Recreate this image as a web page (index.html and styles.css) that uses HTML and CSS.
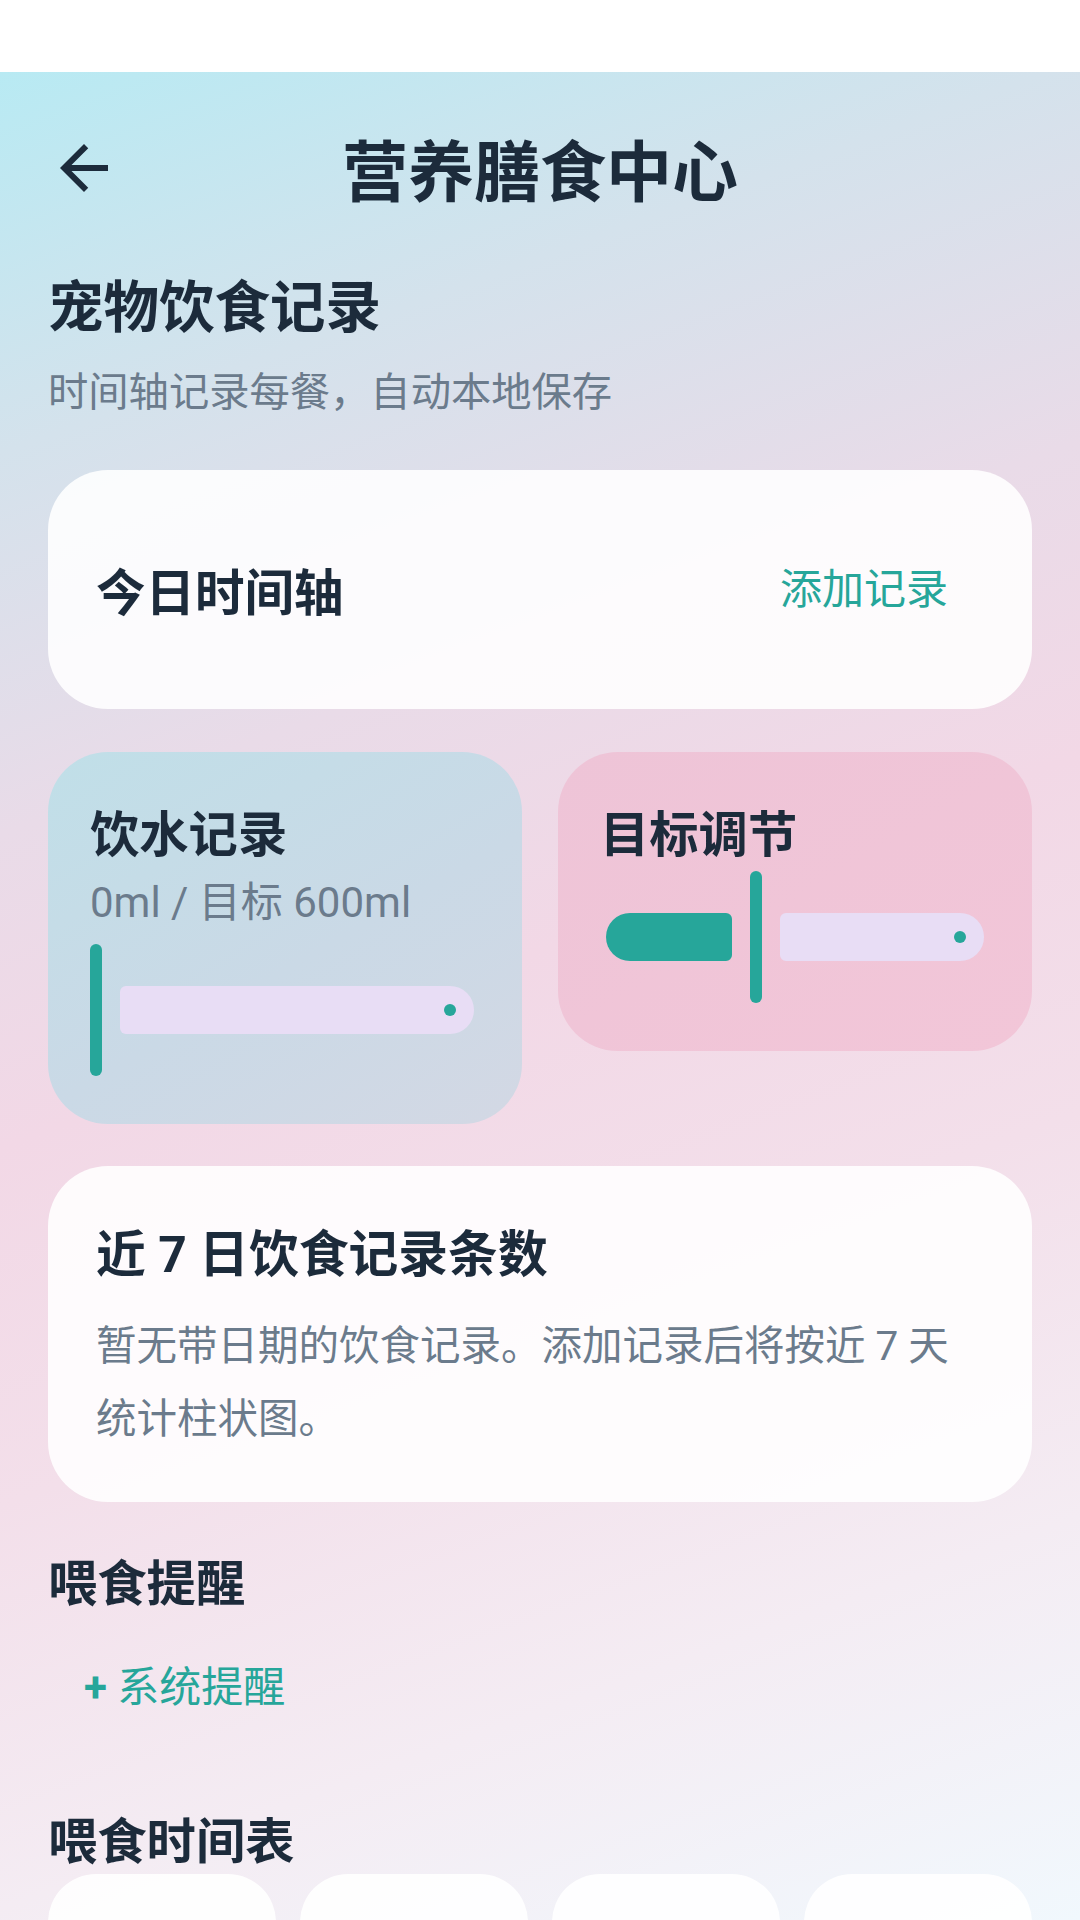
FILE: index.html
```html
<!DOCTYPE html>
<html lang="zh-CN">
<head>
<meta charset="utf-8">
<title>营养膳食中心</title>
<link rel="stylesheet" href="styles.css">
</head>
<body>
<div class="status-bar"></div>
<div class="screen">
  <header class="topbar">
    <button class="back" aria-label="返回">
      <svg viewBox="0 0 24 24" width="72" height="72"><path fill="currentColor" d="M20 11H7.83l5.59-5.59L12 4l-8 8 8 8 1.41-1.41L7.83 13H20v-2z"/></svg>
    </button>
    <h1 class="title">营养膳食中心</h1>
    <span></span>
  </header>

  <main class="content">
    <h2 class="page-heading">宠物饮食记录</h2>
    <p class="page-sub">时间轴记录每餐，自动本地保存</p>

    <section class="card timeline-card">
      <h3 class="timeline-title">今日时间轴</h3>
      <button class="text-btn">添加记录</button>
    </section>

    <div class="stats-row">
      <section class="stat-card water">
        <h3 class="stat-title">饮水记录</h3>
        <p class="stat-sub">0ml / 目标 600ml</p>
        <div class="slider">
          <span class="thumb"></span>
          <span class="track-inactive"><span class="stop"></span></span>
        </div>
      </section>
      <section class="stat-card goal">
        <h3 class="stat-title">目标调节</h3>
        <div class="slider">
          <span class="track-active" style="width:126px"></span>
          <span class="thumb"></span>
          <span class="track-inactive"><span class="stop"></span></span>
        </div>
      </section>
    </div>

    <section class="card chart-card">
      <h3 class="chart-title">近 7 日饮食记录条数</h3>
      <p class="chart-body">暂无带日期的饮食记录。添加记录后将按近 7 天<br>统计柱状图。</p>
    </section>

    <h2 class="section-heading reminder-heading">喂食提醒</h2>
    <button class="text-btn add-reminder"><span class="plus">+</span> 系统提醒</button>

    <h2 class="section-heading schedule-heading">喂食时间表</h2>
    <div class="schedule">
      <div class="slot"></div>
      <div class="slot"></div>
      <div class="slot"></div>
      <div class="slot"></div>
    </div>
  </main>
</div>
</body>
</html>
```

FILE: styles.css
```css
* {
  box-sizing: border-box;
  margin: 0;
  padding: 0;
}

html, body {
  width: 1080px;
  height: 1920px;
  overflow: hidden;
}

body {
  font-family: Roboto, "Noto Sans CJK SC", sans-serif;
  color: #1c2b3b;
  background: #ffffff;
}

.status-bar {
  height: 72px;
  background: #ffffff;
}

.screen {
  height: 1848px;
  overflow: hidden;
  background: linear-gradient(160deg,
    #b8eaf3 0%,
    #d4e2ec 17%,
    #e9dbe8 34%,
    #f2d8e6 48%,
    #f3dfea 64%,
    #f4ecf3 82%,
    #f1f8fd 100%);
}

/* top app bar */
.topbar {
  height: 192px;
  display: grid;
  grid-template-columns: 72px 1fr 72px;
  align-items: center;
  padding: 0 48px;
}

.back {
  width: 72px;
  height: 72px;
  display: flex;
  border: 0;
  background: none;
  color: #1c2b3b;
}

.title {
  font-size: 66px;
  font-weight: 700;
  line-height: 80px;
  text-align: center;
  margin-top: 11px;
}

.content {
  padding: 0 48px;
}

.page-heading {
  font-size: 55.5px;
  font-weight: 700;
  line-height: 76px;
  margin-top: 7px;
}

.page-sub {
  font-size: 40.3px;
  line-height: 56px;
  color: #6b7b8c;
  margin-top: 18px;
}

.card {
  background: rgba(255, 255, 255, 0.88);
  border-radius: 60px;
}

.timeline-card {
  margin-top: 49px;
  height: 239px;
  display: flex;
  align-items: center;
  justify-content: space-between;
  padding: 0 48px;
}

.timeline-title {
  font-size: 49.5px;
  font-weight: 700;
  line-height: 64px;
  margin-top: 9px;
}

.text-btn {
  font-family: inherit;
  font-size: 42px;
  line-height: 56px;
  color: #26a69a;
  background: none;
  border: 0;
  padding: 0 36px;
  text-align: left;
}

/* two stat cards */
.stats-row {
  margin-top: 43px;
  display: grid;
  grid-template-columns: 1fr 1fr;
  gap: 36px;
  align-items: start;
}

.stat-card {
  border-radius: 60px;
  padding: 51px 42px 44px;
}

.stat-card.water {
  background: linear-gradient(150deg, #c0dfe8 0%, #cad9e6 55%, #d3d8e4 100%);
}

.stat-card.goal {
  background: linear-gradient(150deg, #eec4d7 0%, #f2c6d8 100%);
}

.stat-title {
  font-size: 49.3px;
  font-weight: 700;
  line-height: 64px;
}

.stat-sub {
  font-size: 42px;
  line-height: 56px;
  color: #6b7b8c;
  margin-top: 8px;
}

.water .slider {
  margin-top: 9px;
}

.slider {
  height: 140px;
  display: flex;
  align-items: center;
}

.thumb {
  flex: none;
  width: 12px;
  height: 132px;
  border-radius: 6px;
  background: #26a69a;
}

.track-active {
  flex: none;
  height: 48px;
  margin-left: 6px;
  margin-right: 18px;
  background: #26a69a;
  border-radius: 24px 6px 6px 24px;
}

.track-inactive {
  flex: 1;
  height: 48px;
  margin-left: 18px;
  margin-right: 6px;
  background: #e8ddf5;
  border-radius: 6px 24px 24px 6px;
  display: flex;
  align-items: center;
  justify-content: flex-end;
  padding-right: 18px;
}

.stop {
  width: 12px;
  height: 12px;
  border-radius: 50%;
  background: #26a69a;
}

/* 7 day chart card */
.chart-card {
  margin-top: 42px;
  padding: 53px 48px 46px;
}

.chart-title {
  font-size: 49.8px;
  font-weight: 700;
  line-height: 72px;
}

.chart-body {
  font-size: 40.5px;
  line-height: 73px;
  color: #6b7b8c;
  margin-top: 19px;
}

/* reminders */
.section-heading {
  font-size: 49.3px;
  font-weight: 700;
  line-height: 64px;
}

.reminder-heading {
  margin-top: 50px;
}

.add-reminder {
  display: flex;
  align-items: center;
  height: 120px;
  margin-top: 12px;
  white-space: pre;
}

.plus {
  font-weight: 700;
}

.schedule-heading {
  margin-top: 62px;
}

.schedule {
  display: grid;
  grid-template-columns: repeat(4, 1fr);
  gap: 24px;
}

.slot {
  height: 320px;
  border-radius: 48px;
  background: rgba(255, 255, 255, 0.9);
}
```
